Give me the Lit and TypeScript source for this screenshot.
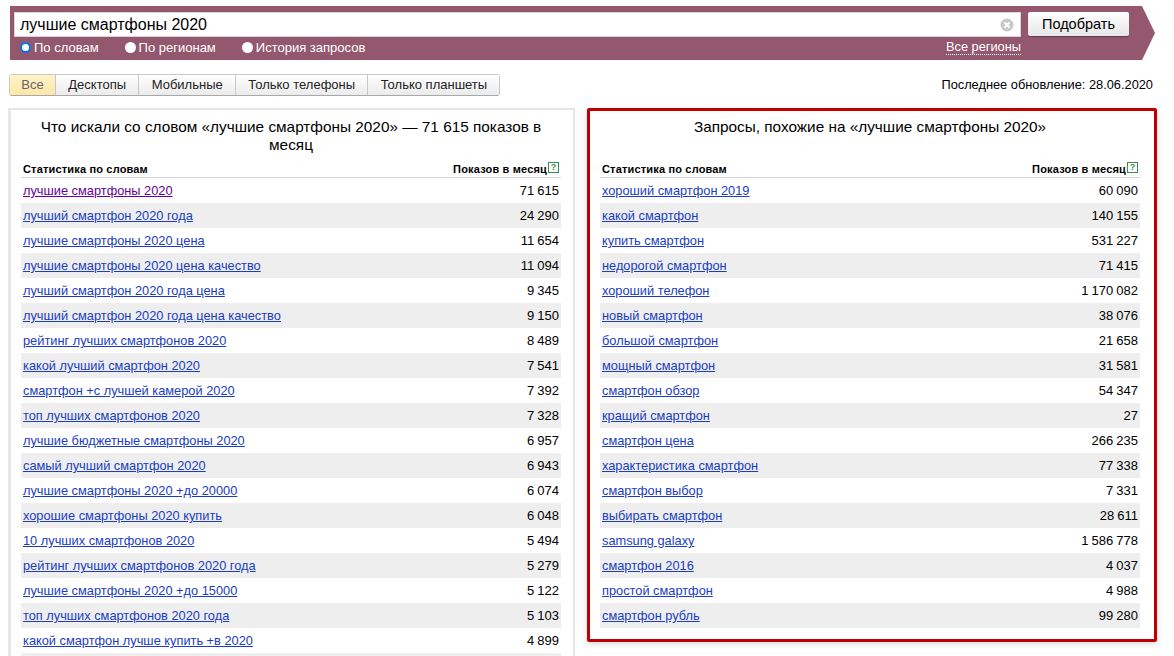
import { css, html, LitElement, TemplateResult } from "lit";
import { customElement } from "lit/decorators.js";

type Row = [string, string];

const LEFT_ROWS: Row[] = [
  ["лучшие смартфоны 2020", "71 615"],
  ["лучший смартфон 2020 года", "24 290"],
  ["лучшие смартфоны 2020 цена", "11 654"],
  ["лучшие смартфоны 2020 цена качество", "11 094"],
  ["лучший смартфон 2020 года цена", "9 345"],
  ["лучший смартфон 2020 года цена качество", "9 150"],
  ["рейтинг лучших смартфонов 2020", "8 489"],
  ["какой лучший смартфон 2020", "7 541"],
  ["смартфон +с лучшей камерой 2020", "7 392"],
  ["топ лучших смартфонов 2020", "7 328"],
  ["лучшие бюджетные смартфоны 2020", "6 957"],
  ["самый лучший смартфон 2020", "6 943"],
  ["лучшие смартфоны 2020 +до 20000", "6 074"],
  ["хорошие смартфоны 2020 купить", "6 048"],
  ["10 лучших смартфонов 2020", "5 494"],
  ["рейтинг лучших смартфонов 2020 года", "5 279"],
  ["лучшие смартфоны 2020 +до 15000", "5 122"],
  ["топ лучших смартфонов 2020 года", "5 103"],
  ["какой смартфон лучше купить +в 2020", "4 899"],
  ["", ""],
];

const RIGHT_ROWS: Row[] = [
  ["хороший смартфон 2019", "60 090"],
  ["какой смартфон", "140 155"],
  ["купить смартфон", "531 227"],
  ["недорогой смартфон", "71 415"],
  ["хороший телефон", "1 170 082"],
  ["новый смартфон", "38 076"],
  ["большой смартфон", "21 658"],
  ["мощный смартфон", "31 581"],
  ["смартфон обзор", "54 347"],
  ["кращий смартфон", "27"],
  ["смартфон цена", "266 235"],
  ["характеристика смартфон", "77 338"],
  ["смартфон выбор", "7 331"],
  ["выбирать смартфон", "28 611"],
  ["samsung galaxy", "1 586 778"],
  ["смартфон 2016", "4 037"],
  ["простой смартфон", "4 988"],
  ["смартфон рубль", "99 280"],
];

const TABS = ["Все", "Десктопы", "Мобильные", "Только телефоны", "Только планшеты"];

@customElement("app-root")
class AppRoot extends LitElement {
  private renderRows(rows: Row[], visitedFirst: boolean): TemplateResult[] {
    return rows.map(
      ([q, n], i) => html`
        <div class="row">
          <a class="q ${visitedFirst && i === 0 ? "visited" : ""}" href="#">${q}</a>
          <span class="n">${n}</span>
        </div>
      `
    );
  }

  private renderHead(): TemplateResult {
    return html`
      <div class="head">
        <span>Статистика по словам</span>
        <span class="head-r">Показов в месяц<i class="help">?</i></span>
      </div>
    `;
  }

  protected render(): TemplateResult {
    return html`
      <div class="banner">
        <div class="search">
          <div class="input">
            <span>лучшие смартфоны 2020</span>
            <svg class="clear" width="14" height="14" viewBox="0 0 14 14">
              <circle cx="7" cy="7" r="6.5" fill="#c9c9c9" />
              <path d="M4.5 4.5l5 5M9.5 4.5l-5 5" stroke="#fff" stroke-width="2" />
            </svg>
          </div>
          <button class="go">Подобрать</button>
        </div>
        <div class="modes">
          <label class="mode"><input type="radio" name="m" checked />По словам</label>
          <label class="mode"><input type="radio" name="m" />По регионам</label>
          <label class="mode"><input type="radio" name="m" />История запросов</label>
          <a class="regions">Все регионы</a>
        </div>
      </div>

      <div class="bar">
        <div class="tabs">
          ${TABS.map(
            (t, i) => html`<span class="tab ${i === 0 ? "on" : ""}">${t}</span>`
          )}
        </div>
        <div class="updated">Последнее обновление: 28.06.2020</div>
      </div>

      <div class="cols">
        <section class="card">
          <h2>Что искали со словом «лучшие смартфоны 2020» — 71 615 показов в месяц</h2>
          ${this.renderHead()}
          ${this.renderRows(LEFT_ROWS, true)}
        </section>
        <section class="card red">
          <h2>Запросы, похожие на «лучшие смартфоны 2020»</h2>
          ${this.renderHead()}
          ${this.renderRows(RIGHT_ROWS, false)}
        </section>
      </div>
    `;
  }

  static styles = css`
    :host {
      display: block;
      height: 656px;
      overflow: hidden;
      background: #fff;
      color: #000;
      font-family: "Liberation Sans", Arial, sans-serif;
      font-size: 13px;
    }

    /* top search banner */
    .banner {
      margin: 6px 0 0 10px;
      width: 1145px;
      height: 54px;
      box-sizing: border-box;
      padding: 6px 0 0 4px;
      background: #93586d;
      clip-path: polygon(0 0, 1132px 0, 1145px 27px, 1132px 54px, 0 54px);
    }
    .search {
      display: flex;
      gap: 7px;
    }
    .input {
      width: 1007px;
      height: 25px;
      box-sizing: border-box;
      padding: 0 6px 0 5px;
      display: flex;
      align-items: center;
      justify-content: space-between;
      background: #fff;
      border: 1px solid #d9d4d6;
      font-size: 16px;
    }
    .go {
      width: 101px;
      height: 24px;
      padding: 0;
      border: 0;
      border-radius: 2px;
      background: linear-gradient(#ffffff, #e6e6e6);
      box-shadow: 0 1px 1px rgba(0, 0, 0, 0.35);
      font: 14.5px "Liberation Sans", Arial, sans-serif;
      color: #000;
    }
    .modes {
      display: flex;
      align-items: center;
      gap: 26px;
      height: 20px;
      padding-left: 6px;
      color: #fff;
    }
    .mode {
      display: flex;
      align-items: center;
      gap: 3px;
    }
    .mode input {
      appearance: none;
      width: 11px;
      height: 11px;
      margin: 0;
      box-sizing: border-box;
      border-radius: 50%;
      background: #fff;
    }
    .mode input:checked {
      border: 2px solid #1270e8;
    }
    .regions {
      margin-left: auto;
      margin-right: 134px;
      margin-top: 1px;
      font-size: 12.8px;
      line-height: 14px;
      border-bottom: 1px dotted #fff;
      color: #fff;
    }

    /* tabs and update date */
    .bar {
      display: flex;
      align-items: center;
      justify-content: space-between;
      margin: 14px 21px 0 9px;
      height: 22px;
    }
    .tabs {
      display: flex;
      height: 22px;
      box-sizing: border-box;
      border: 1px solid #c8c8c8;
      border-bottom-color: #a8a8a8;
      border-radius: 3px;
    }
    .tab {
      display: flex;
      align-items: center;
      justify-content: center;
      box-sizing: border-box;
      padding: 0 12.3px 1px;
      border-left: 1px solid #c8c8c8;
      background: linear-gradient(#ffffff, #ebebeb);
      color: #222;
    }
    .tab.on {
      width: 45px;
      border-left: 0;
      padding: 0 0 1px;
      background: linear-gradient(#fff3c8, #fce7a8);
      color: #666;
    }
    .updated {
      font-size: 12.8px;
      padding-bottom: 1px;
    }

    /* two result cards */
    .cols {
      display: flex;
      align-items: flex-start;
      gap: 12px;
      margin: 12px 0 0 8px;
    }
    .card {
      flex: none;
      width: 567px;
      box-sizing: border-box;
      padding: 8px 12px 10px 10px;
      border: solid #e6e6e6;
      border-width: 2px 2px 2px 3px;
    }
    .card.red {
      width: 570px;
      padding: 7px 14px 11px 10px;
      border: 3px solid #c00000;
      border-radius: 2px;
      box-shadow: 0 2px 6px rgba(0, 0, 0, 0.15);
    }
    h2 {
      margin: 0;
      padding: 0 10px;
      min-height: 36px;
      font-size: 15.35px;
      font-weight: 400;
      line-height: 18px;
      text-align: center;
    }
    .head {
      display: flex;
      justify-content: space-between;
      align-items: center;
      height: 19px;
      margin-top: 5px;
      padding: 1px 2px 0;
      box-sizing: border-box;
      border-bottom: 1px solid #d4d4dc;
      font-size: 11px;
      font-weight: 700;
      letter-spacing: 0.17px;
    }
    .head-r {
      display: flex;
      align-items: center;
      gap: 1px;
    }
    .help {
      display: inline-flex;
      align-items: center;
      justify-content: center;
      width: 9px;
      height: 9px;
      margin-top: -2px;
      border: 1px solid #3f8a4e;
      font-size: 9px;
      font-style: normal;
      letter-spacing: 0;
      line-height: 9px;
      color: #3f8a4e;
    }
    .row {
      display: flex;
      justify-content: space-between;
      align-items: center;
      height: 25px;
      padding: 0 2px;
      font-size: 12.8px;
    }
    .row:nth-child(even) {
      background: #eeeeee;
    }
    .q {
      color: #1a3dc1;
      text-decoration: underline;
    }
    .q.visited {
      color: #660099;
    }
    .n {
      color: #000;
      font-size: 13px;
      word-spacing: -0.5px;
    }
  `;
}

declare global {
  interface HTMLElementTagNameMap {
    "app-root": AppRoot;
  }
}
